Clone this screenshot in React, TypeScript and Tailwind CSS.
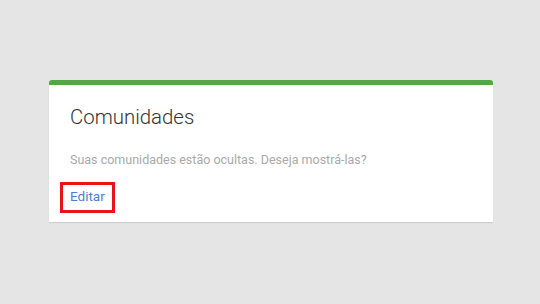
import React from 'react';

const App: React.FC = () => {
  return (
    <div className="h-[304px] w-[540px] bg-[#e5e5e5] pt-[80px] pl-[49px]" style={{ fontFamily: 'Roboto, "Noto Sans", sans-serif' }}>
      <div className="w-[444px] h-[142px] bg-white rounded-t-[3px] border-t-[5px] border-[#58a549] shadow-[0_1px_1px_rgba(0,0,0,0.12)] px-[21px] pt-[20px]">
        <h2 className="text-[20.4px] leading-[24px] font-light text-[#333333]">Comunidades</h2>
        <p className="mt-[23px] text-[12.5px] leading-[16px] text-[#a9a9a9]">
          Suas comunidades estão ocultas. Deseja mostrá-las?
        </p>
        <div className="mt-[14px] -ml-[10px] inline-block border-[3px] border-[#e8131b] px-[7px] pb-[3px]">
          <a href="#" className="block text-[13.5px] leading-[22px] text-[#4a7fd6]">Editar</a>
        </div>
      </div>
    </div>
  );
};

export default App;
